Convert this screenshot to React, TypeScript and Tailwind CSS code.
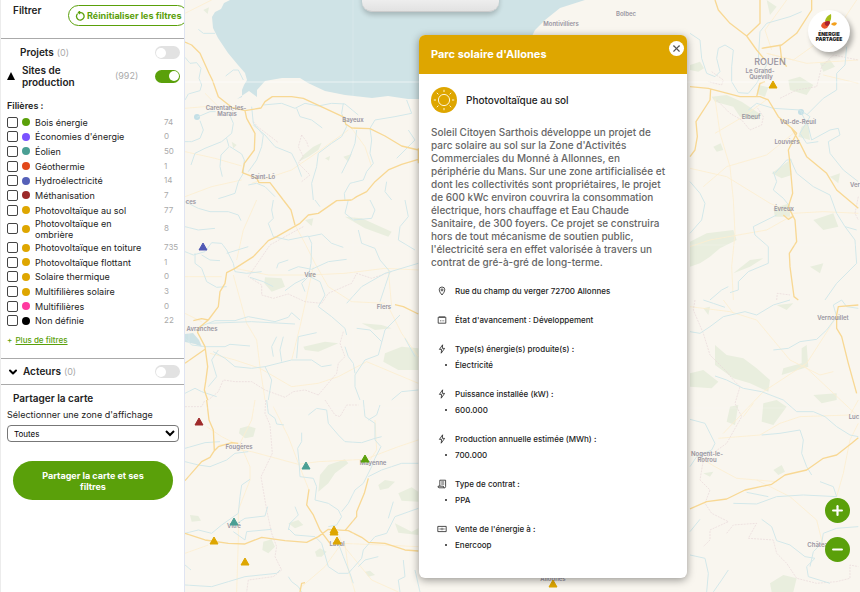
import React from "react";
import { ChevronDown, Minus, Plus, X } from "lucide-react";

const sectors = [
  { name: "Bois énergie", count: 74, dot: "bg-[#5aa00a]" },
  { name: "Économies d'énergie", count: 0, dot: "bg-[#7a52ff]" },
  { name: "Éolien", count: 50, dot: "bg-[#4a9f94]" },
  { name: "Géothermie", count: 1, dot: "bg-[#e2481a]" },
  { name: "Hydroélectricité", count: 14, dot: "bg-[#5560b8]" },
  { name: "Méthanisation", count: 7, dot: "bg-[#9b2929]" },
  { name: "Photovoltaïque au sol", count: 77, dot: "bg-[#dea600]" },
  { name: "Photovoltaïque en ombrière", count: 8, dot: "bg-[#dea600]" },
  { name: "Photovoltaïque en toiture", count: 735, dot: "bg-[#dea600]" },
  { name: "Photovoltaïque flottant", count: 1, dot: "bg-[#dea600]" },
  { name: "Solaire thermique", count: 0, dot: "bg-[#dea600]" },
  { name: "Multifilières solaire", count: 3, dot: "bg-[#dea600]" },
  { name: "Multifilières", count: 0, dot: "bg-[#ff3aa0]" },
  { name: "Non définie", count: 22, dot: "bg-black" },
];

// Outline icons, on a 10 unit grid
const icons = {
  pin: "M5 9Q2.2 5.8 2.2 3.8A2.8 2.8 0 0 1 7.8 3.8Q7.8 5.8 5 9ZM5 2.9A1 1 0 1 0 5 4.9A1 1 0 1 0 5 2.9",
  calendar: "M1.2 2.2H8.8V8.2H1.2ZM3 1V3M5 1V3M7 1V3M3 5.8H3.8M4.7 5.8H5.5M6.4 5.8H7.2",
  bolt: "M5.6 .8L2.4 5.4H4.6L4.2 9.2L7.6 4.4H5.4Z",
  contract: "M2.8 7V1.2H8.6V7.6Q8.6 8.8 7.4 8.8H2Q1 8.8 1 7.2H6.4Q6.4 8.8 7.4 8.8M4.2 3H7.2M4.2 5H7.2",
  banknote: "M.8 2.4H9.2V7.6H.8ZM5 3.8V6.2M3.8 4.4V5.6M6.2 4.4V5.6M2.2 4.6V5.4M7.8 4.6V5.4",
  reset: "M2.6 2.6A3.8 3.8 0 1 0 6.2 1.6M6.2 1.6H3.4M5 .2L3.4 1.6L5 3",
};

const details = [
  { icon: icons.pin, label: "Rue du champ du verger 72700 Allonnes" },
  { icon: icons.calendar, label: "État d'avancement : Développement" },
  { icon: icons.bolt, label: "Type(s) énergie(s) produite(s) :", value: "Électricité" },
  { icon: icons.bolt, label: "Puissance installée (kW) :", value: "600.000" },
  { icon: icons.bolt, label: "Production annuelle estimée (MWh) :", value: "700.000" },
  { icon: icons.contract, label: "Type de contrat :", value: "PPA" },
  { icon: icons.banknote, label: "Vente de l'énergie à :", value: "Enercoop" },
];

const towns = [
  { name: "Carentan-les-", x: 41, y: 110 },
  { name: "Marais", x: 42, y: 116 },
  { name: "Bayeux", x: 168, y: 122 },
  { name: "Saint-Lô", x: 78, y: 179 },
  { name: "ces", x: 6, y: 204 },
  { name: "Vire", x: 125, y: 277 },
  { name: "Flers", x: 199, y: 309 },
  { name: "Avranches", x: 17, y: 331 },
  { name: "Fougères", x: 54, y: 449 },
  { name: "Mayenne", x: 188, y: 465 },
  { name: "Vitré", x: 49, y: 528 },
  { name: "Laval", x: 152, y: 546 },
  { name: "Montivilliers", x: 376, y: 26 },
  { name: "Bolbec", x: 441, y: 16 },
  { name: "Le Grand-", x: 575, y: 73 },
  { name: "Quevilly", x: 576, y: 79 },
  { name: "Elbeuf", x: 566, y: 119 },
  { name: "Val-de-Reuil", x: 613, y: 124 },
  { name: "Louviers", x: 602, y: 144 },
  { name: "Évreux", x: 599, y: 211 },
  { name: "Ver", x: 670, y: 187 },
  { name: "Vernouillet", x: 648, y: 320 },
  { name: "Luc", x: 669, y: 419 },
  { name: "Nogent-le-", x: 522, y: 456 },
  { name: "Rotrou", x: 522, y: 462 },
  { name: "Châteaudun", x: 640, y: 547 },
  { name: "Allonnes", x: 368, y: 581 },
];

const markers = [
  { x: 18, y: 247, color: "#5058b4" },
  { x: 14, y: 422, color: "#9f2a2a" },
  { x: 121, y: 466, color: "#4a9f94" },
  { x: 180, y: 459, color: "#5aa00a" },
  { x: 49, y: 522, color: "#4a9f94" },
  { x: 29, y: 541, color: "#dea600" },
  { x: 60, y: 562, color: "#dea600" },
  { x: 149, y: 532, color: "#dea600" },
  { x: 149, y: 530, color: "#dea600" },
  { x: 152, y: 541, color: "#dea600" },
  { x: 588, y: 85, color: "#dea600" },
  { x: 368, y: 584, color: "#dea600" },
];

// Each map sheet is drawn at three units per map unit
const sheets = [
  {
    at: "translate(0 0) scale(0.3333)",
    woods: "M355 465L385 440L410 428L400 450L370 470L340 485ZM420 475L435 468L432 482ZM140 425L155 435L145 445ZM55 30L72 22L68 42ZM475 470L500 462L490 485Z",
    rivers:
      "M0 172L15 190L35 188L48 205L42 235L50 255L45 272L10 282L0 300M40 88L55 100L90 100M35 352L75 335L92 335M45 362L55 390L45 415L20 425L0 425M130 335L145 370L140 400L110 425L60 445L30 460L18 495M125 415L132 440L108 465L105 500L112 530M135 440L170 462L178 480L175 520L160 545L150 580L120 590L100 596M200 320L205 370L235 405L230 440L215 480L190 515M205 375L240 405L270 440L320 460L335 490L350 530M235 315L290 310L330 325L360 310L400 318L440 310L480 312L520 345M335 325L345 350L380 360L412 384M475 310L470 340L485 380L470 410L440 430L400 460L395 500L380 550L385 600M515 390L510 430L495 470L470 520M665 300L680 340L630 350L570 360L555 385L560 420L555 460L565 490L545 515L535 540L495 550L478 580L480 600M670 390L690 420L660 450L635 475M190 555L215 550L240 560L270 590M605 545L600 575L620 600M122 228L145 210L160 210L175 240",
    lanes: "M0 40L30 25L80 0M0 325L60 320L110 325M0 455L90 475L170 498M200 550L320 510L400 455L490 390M500 385L540 440L560 500M0 590L80 560L170 540M100 320L60 280",
    roads:
      "M0 126L20 135L45 160L72 220L82 240L100 290L140 322L180 332L228 324L240 305L262 290L320 290L355 295L420 325L478 352L482 372L500 384L555 386L600 408L650 438L700 450M180 332L185 355L210 400L208 450L178 490L172 518L215 535L222 548L255 548L295 600M700 478L650 493L610 510L570 545L545 575L515 590L500 600M700 445L700 490",
    borders: "M350 405L340 440L355 470L340 490L375 525L350 545M350 405L365 425L370 440M205 365L220 382L260 412L280 428",
  },
  {
    at: "translate(0 200) scale(0.3333)",
    woods: "M240 232L290 235L300 260L260 275L238 250ZM355 440L420 425L460 430L400 455L360 450ZM600 460L650 440L700 445V510L640 510L595 485ZM360 60L385 55L380 78ZM480 50L530 55L620 95L610 110L540 85ZM530 370L590 375L620 385L570 390Z",
    rivers:
      "M0 5L40 25L75 35L130 35L160 45L168 62M0 80L40 90L90 85M0 155L25 165L60 155L80 128L110 130L125 150L145 190L150 215L185 220L230 215M30 160L30 190L50 205L65 245L95 262L125 260M50 165L75 180L105 182M125 160L190 140M265 0L260 30L265 55L250 70L265 110L310 120L370 108L380 130L378 190L370 230L350 250L360 275M360 235L330 250L300 272M390 0L405 20M370 110L410 102L440 130L475 142M310 212L340 200L380 208L430 185L485 178M310 180L280 190L275 205M195 232L235 245L265 260M50 378L90 362L150 362L190 350L270 365L310 352L320 338L345 360M70 370L200 365L330 372M0 415L20 435L60 440L120 440L135 433L195 438M85 455L120 475L150 500L200 505L240 500L320 480L380 480L410 500L440 495M70 560L95 530L80 480L100 450M265 470L260 440L275 410M290 485L285 450L295 410M335 475L340 410L395 398M240 500L260 540L250 600M375 230L405 245L420 285L400 320L440 350L480 385L485 405M490 0L480 40L505 60L560 55L570 30L555 0M520 90L530 130L570 145L585 180L615 215L600 260L585 305M645 345L600 390L580 465L540 480L510 525L510 560L525 600M485 310L530 260L600 220L700 190M660 415L690 470M515 385L555 390L590 425M660 0L670 50L645 80L640 120L690 150M480 440L490 470L505 490L510 520M0 580L30 565L50 575L95 590M620 600L650 575L700 570",
    lanes: "M150 205L250 225L375 225L480 220L600 205L700 210M215 0L175 90L155 180M330 75L360 130L390 190L430 260L500 305L600 310M385 200L345 380L320 480M0 230L110 230M145 225L185 370L215 420L225 500L240 600M75 460L150 480L225 505L320 560L400 550L460 530L545 485L700 550M0 340L50 365M610 320L650 400L700 470M610 210L620 320",
    roads:
      "M500 0L455 2L400 40L370 45L345 70L275 110L250 122L205 170L150 205L125 218L120 250L105 275L100 320L70 360L40 385L38 398L60 440L68 500L62 545L58 570L68 600M295 0L318 30L330 75M25 362L50 356L70 360M0 490L60 448M630 314L655 320L700 342",
    borders: "M355 80L300 110L255 135L190 230L230 255L230 285L265 295L310 282L360 305L410 310L430 280L500 250L515 220L560 235L620 215M475 395L465 430L480 470L460 490L455 520L400 585M400 585L360 570L325 575L300 592L240 570L200 545L150 545L115 540L100 575L70 600",
  },
  {
    at: "translate(0 400) scale(0.3333)",
    woods: "M165 85L190 78L212 85L205 110L180 115L162 100ZM405 225L430 195L480 178L490 190L450 220L430 250L400 275ZM235 425L260 418L270 440L250 460L232 450ZM15 345L40 348L48 362L20 365ZM640 280L680 262L700 275V305L650 302ZM580 255L600 240L630 245L610 265L585 270ZM630 370L680 395L700 385V405L640 398ZM390 455L405 445L425 455L410 470L395 470ZM310 370L340 360L355 375L330 385ZM540 515L555 512L570 525L550 530Z",
    rivers:
      "M0 145L60 128L105 125M0 185L40 195L75 200L125 180L150 160L190 155M245 0L250 40L270 55L275 72L297 75M350 98L350 125L338 145L342 185L345 230L385 235L395 260L390 300L430 310L460 330L470 350L455 375L430 380M370 45L395 25L425 30L430 70L460 105L480 125L530 128L570 115L590 110M535 0L540 50L570 70L570 120L588 140L570 175L560 200L535 250L510 270L490 310L470 335M550 230L590 210L620 200L650 190L700 190M585 15L575 45L550 60M0 400L40 390L80 400L110 375L160 340L165 290L170 255L195 238M140 380L180 355L240 348L248 320M145 395L180 420L185 395L260 388M310 385L330 405L390 410L410 430L430 500L460 520L490 520L530 475L535 450L570 410L605 400L630 350L700 325M610 355L625 305M0 555L80 560L130 545L180 530L275 520L285 510M310 530L320 545L340 560L350 576M330 320L340 345L315 370L310 390M460 430L475 470L495 520L505 550M655 480L660 530L640 540L645 576M0 495L18 510M520 500L540 480L580 470M690 510L705 576",
    lanes: "M65 80L110 110L150 130L100 135M210 0L200 60L165 130L195 200L195 240L160 330L160 420L155 576M165 150L200 155L340 193L400 185L540 178L640 140L700 120M265 20L310 110L340 190L372 270M460 400L470 430L420 500L350 560M470 430L590 435L700 440M480 430L490 510L510 576M70 435L0 460M470 430L560 540L640 576M570 60L575 150L555 180",
    roads:
      "M65 0L72 60L85 90L88 152L75 172L50 185L0 242M88 152L100 140L140 128L160 130M0 400L60 420L130 430L180 432L230 412L300 422L365 427L400 410L430 388L490 392L530 412L550 427L600 430L660 450L700 453M372 268L365 315L385 345L405 390L435 430M550 235L538 280L515 335L515 350L480 392M345 576L350 550L360 548",
    borders: "M242 0L240 40L255 75L262 160L228 230L245 330L260 400L275 440L270 470L290 510L265 530L190 540L185 576M420 0L450 45L465 50L485 15L520 15M0 20L50 20L60 0",
  },
  {
    at: "translate(505 0) scale(0.3333)",
    woods: "M0 195L30 185L42 205L25 215L0 210ZM65 290L110 285L155 305L215 345L195 360L150 350L130 320L75 305ZM205 255L235 262L225 290L200 282ZM295 240L330 230L370 255L350 285L300 270ZM390 190L420 180L435 200L400 215ZM0 725L50 700L130 690L140 720L90 745L60 770L30 790L0 800ZM70 440L92 430L100 450L80 455ZM335 380L355 370L360 420L325 410ZM245 520L300 480L305 525L275 535ZM250 625L300 610L300 650L255 650ZM370 660L430 640L445 680L400 690ZM130 820L180 780L220 775L180 800ZM230 0L260 20L240 45ZM420 530L450 520L445 550ZM360 800L400 790L390 820Z",
    rivers:
      "M0 100L30 120L35 175L50 220L75 230L90 215L80 175L85 145L105 135L130 150L125 200L125 245L145 278L175 280L200 250L235 185M175 330L200 310L250 325L330 330L355 380L365 420L420 390L445 385L450 405L415 425L420 460L460 510L505 545M205 180L210 95L230 70L300 50L335 35M350 345L400 295L440 270L440 220L465 195L470 140M300 475L320 520L370 560L420 585L440 640L465 680L500 690M250 515L260 545L250 570L280 595L300 620M255 520L290 480L305 480M0 545L30 580L45 610L35 660L0 700M260 645L190 680L195 705L235 740L235 790L175 815L145 845L145 870L120 878M115 860L95 870L60 900M465 680L495 720L500 790L440 850L405 900M330 330L360 350L330 400L350 430L385 425",
    lanes: "M290 0L225 90L245 150M75 295L90 400L120 500L130 600L135 700L125 800L130 900M0 505L110 530L240 610L310 640L400 635L505 640M310 400L230 465L110 500L40 560M310 645L230 690L60 720L0 740M500 0L460 60L380 130L310 180L230 160L350 190L505 180M235 295L160 350L75 400M400 225L505 250",
    roads:
      "M75 0L85 30L120 70L170 108L200 150L225 180M210 0L210 70L170 108M365 0L365 30L320 100L275 135L215 145M270 135L275 180L290 200M0 260L55 265L150 290L210 290L235 300L265 350L305 385L325 420L350 470L410 520L440 570L505 625M62 268L60 300L18 365L22 410L15 450L0 470M305 385L320 400L295 450L300 490L308 580L295 620L315 660L320 725L298 760L300 800L312 890L325 900M200 290L210 250L225 245M280 645L295 658L308 650",
    borders: "M65 215L100 240L95 255L55 245M80 300L120 340L155 360L180 390L215 375L220 350L200 320M270 295L320 270L380 260L395 200L430 165L505 180M505 590L495 640L505 660M260 900L262 880L300 885",
  },
  {
    at: "translate(505 300) scale(0.3333)",
    woods: "M75 135L110 165L160 175L200 205L240 240L235 275L180 250L130 235L75 195ZM220 310L260 300L290 320L250 375L215 365ZM0 220L40 210L85 245L65 265L0 260ZM335 145L350 135L355 200L275 225L280 205L335 190ZM370 285L440 280L440 300L395 310ZM240 850L280 825L320 835L310 876L245 876ZM250 510L275 495L285 515L265 525ZM120 320L145 315L135 375L110 365ZM40 25L60 20L55 45ZM260 15L310 10L290 30ZM40 520L70 515L60 530Z",
    rivers:
      "M0 95L30 100L60 80L100 50L165 35L200 45L250 15L300 0M40 0L70 10L105 22M75 228L110 240L160 265L215 275L280 300L320 335L370 335L405 350L440 380L480 405L505 410M250 150L295 145L330 125L380 118L410 90L440 50L430 15L455 0M215 405L270 400L330 390L340 420L335 460L350 500L365 525M0 358L45 370L60 400L75 430L65 450M65 450L20 470L0 500M130 610L200 612L260 590L340 585L440 590M170 577L235 590M390 545L430 560L440 590M215 658L245 680L260 722L300 735L345 770L375 775L350 800L355 830L420 850M400 700L440 685L505 680M400 700L395 730L370 755L360 800M0 765L45 775L55 820L50 876M115 810L95 840L70 876M0 695L30 658M455 0L470 20L505 25",
    lanes: "M0 20L120 35L200 60L300 180L390 225L430 215M440 50L350 190L220 275L100 400M85 415L210 405L270 370L330 350L480 345L505 300M0 455L75 500L140 535L260 545M340 195L505 350M190 310L160 350M505 370L480 420L460 520L440 590M300 590L380 660L400 740M100 0L130 40M200 540L300 590",
    roads:
      "M0 627L50 605L110 597L165 570L245 553L285 525L350 510L400 475L440 465L485 430L505 413M505 15L445 20L440 45L440 85L455 110L475 190L500 280",
    borders: "M15 0L10 30L40 100L60 165L110 215L130 240L150 260L135 310L155 350L110 430L40 480L30 540L60 570L45 610L65 640L115 665L60 690L60 720L40 740M110 700L130 675L200 670L175 715L250 720L260 760L290 790L320 835L380 850L440 845L480 835L480 795L505 800",
  },
];

const Map = () => (
  <svg
    viewBox="0 0 675 592"
    preserveAspectRatio="xMidYMid slice"
    className="absolute inset-0 h-full w-full bg-[#f9f6ef]"
    role="img"
    aria-label="Carte des projets"
  >
    <path
      fill="#cfe3e6"
      d="M45 0L39 3L36 9L30 12L27 17L28 28L33 38L43 53L53 65L60 73L62 80L59 85L57 90L57 97L52 99L64 91L72 97L72 90L80 81L97 78L115 78L123 83L140 91L160 95L187 98L203 96L223 99L270 99L330 60L345 40L350 30L360 20L375 8L400 0ZM0 334L8 333L14 340L17 347L10 344L0 342Z"
    />
    <circle cx="12" cy="117" r="3" fill="#c3dfe6" />
    <circle cx="616" cy="112" r="3" fill="#c3dfe6" />
    {sheets.map((sheet) => (
      <g key={sheet.at} transform={sheet.at} fill="none" strokeLinejoin="round">
        <path d={sheet.woods} fill="#e9eede" />
        <path d={sheet.lanes} stroke="#fdeed0" strokeWidth="2.5" />
        <path d={sheet.borders} stroke="#e8d8da" strokeWidth="2" strokeDasharray="6 3" />
        <path d={sheet.rivers} stroke="#d3e8ea" strokeWidth="3" />
        <path d={sheet.roads} stroke="#f8d894" strokeWidth="4" />
      </g>
    ))}
    <g stroke="#fff">
      <path d="M0 82H675" strokeOpacity="0.6" />
      <path d="M0 245H675M0 408H675M4 0V592M168 0V592" strokeOpacity="0.2" />
    </g>
    <g
      fontFamily="Inter, sans-serif"
      fontSize="6"
      fontWeight="600"
      fill="#98949f"
      textAnchor="middle"
    >
      {towns.map((town) => (
        <text key={town.name} x={town.x} y={town.y}>
          {town.name}
        </text>
      ))}
      <text x="585" y="65" fontSize="9" fontWeight="500">
        ROUEN
      </text>
    </g>
    {markers.map((m) => (
      <path
        key={`${m.x}-${m.y}`}
        d={`M${m.x} ${m.y - 4}L${m.x + 4} ${m.y + 3}H${m.x - 4}Z`}
        fill={m.color}
        stroke={m.color}
      />
    ))}
  </svg>
);

const Icon = ({ d, bold = false }: { d: string; bold?: boolean }) => (
  <svg
    viewBox="0 0 10 10"
    className="size-[10px] shrink-0"
    fill="none"
    stroke="currentColor"
    strokeWidth={bold ? 1.3 : 0.8}
    strokeLinejoin="round"
  >
    <path d={d} />
  </svg>
);

const Toggle = ({ label, on = false }: { label: string; on?: boolean }) => (
  <input
    type="checkbox"
    role="switch"
    aria-label={label}
    defaultChecked={on}
    className="flex h-[13px] w-[25px] shrink-0 appearance-none items-center rounded-full bg-[#e2e2e2] px-px before:block before:size-[10px] before:rounded-full before:bg-white before:content-[''] checked:justify-end checked:bg-[#5aa00a]"
  />
);

const SunIcon = () => (
  <svg viewBox="0 0 26 26" className="size-[26px]" fill="none">
    <circle cx="13" cy="13" r="13" fill="#dea600" />
    <g stroke="#fff5d6">
      <circle cx="13" cy="13" r="5.6" />
      <path d="M13 2.8V5M13 21v2.2M2.8 13H5M21 13h2.2M5.8 5.8l1.6 1.6M18.6 18.6l1.6 1.6M20.2 5.8l-1.6 1.6M7.4 18.6l-1.6 1.6" />
    </g>
  </svg>
);

const Logo = () => (
  <div className="flex size-[42px] flex-col items-center rounded-full bg-white pt-1 text-center text-[5px] leading-[5px] font-black text-[#222] shadow-[3px_4px_5px_rgba(0,0,0,0.3)]">
    <svg viewBox="0 0 20 16" className="mb-[2px] h-4 w-5">
      <path d="M6 7Q7 2 12 0Q13 5 10 9Z" fill="#a5bd19" />
      <path d="M2 12Q3 7 10 7Q12 9 8 14Q4 16 2 12Z" fill="#e8552b" />
      <path d="M6 8Q10 6 11 8Q11 11 8 12Q5 11 6 8Z" fill="#a9212e" />
      <path d="M12 10Q15 7 18 9Q17 13 13 11Z" fill="#f3a01c" />
    </svg>
    <span>ÉNERGIE</span>
    <span>PARTAGÉE</span>
  </div>
);

const Sidebar = () => (
  <aside className="w-[185px] shrink-0 overflow-hidden border-x border-l-[#ececec] border-r-[#dfe4f2] bg-white text-[#222]">
    <div className="flex h-[38px] items-start justify-between pt-[5px] pl-3">
      <h2 className="text-[10px] leading-[11px] font-semibold">Filtrer</h2>
      <button className="-mr-1 flex h-[21px] w-[120px] shrink-0 items-center gap-[2px] rounded-full border border-[#5aa00a] pl-[6px] text-[9px] font-bold whitespace-nowrap text-[#5aa00a]">
        <Icon d={icons.reset} bold />
        Réinitialiser les filtres
      </button>
    </div>

    <section className="border-t border-[#aaa] pt-[7px] pr-1 pb-3 pl-[6px]">
      <div className="flex h-[13px] items-center pl-[13px] text-[10px]">
        <h3 className="font-semibold">Projets</h3>
        <span className="ml-[3px] grow text-[9px] text-[#aaa]">(0)</span>
        <Toggle label="Projets" />
      </div>
      <div className="mt-[5px] flex items-center gap-[7px] text-[10px]">
        <svg viewBox="0 0 8 8" className="size-2">
          <path d="M4 0L8 8H0Z" />
        </svg>
        <h3 className="w-[86px] leading-3 font-semibold">
          Sites de production
        </h3>
        <span className="grow text-[9px] text-[#aaa]">(992)</span>
        <Toggle label="Sites de production" on />
      </div>

      <h4 className="mt-3 text-[9px] leading-[12px] font-semibold">Filières :</h4>
      <ul className="mt-[3px] flex h-[213px] flex-col justify-between text-[9px]">
        {sectors.map((sector) => (
          <li key={sector.name}>
            <label className="flex min-h-[14px] items-center leading-[11px]">
              <input
                type="checkbox"
                className="size-[11px] shrink-0 appearance-none rounded-[2px] border border-[#444] bg-white"
              />
              <span className={`mx-1 size-2 shrink-0 rounded-full ${sector.dot}`} />
              <span className="w-[130px] shrink-0 pl-px">
                <span className="block w-[115px]">{sector.name}</span>
              </span>
              <span className="text-[8px] text-[#aaa]">{sector.count}</span>
            </label>
          </li>
        ))}
      </ul>
      <p className="mt-[6px] text-[8px] leading-[12px] font-medium text-[#5aa00a]">
        + <a href="#filtres" className="ml-px underline">Plus de filtres</a>
      </p>
    </section>

    <section className="flex h-[27px] items-center border-y border-[#aaa] pr-1 pl-[6px]">
      <ChevronDown size={12} strokeWidth={4} className="text-black" />
      <h3 className="ml-1 text-[10px] font-semibold">Acteurs</h3>
      <span className="ml-[3px] grow text-[9px] text-[#aaa]">(0)</span>
      <Toggle label="Acteurs" />
    </section>

    <section className="pt-[7px] pr-[5px] pl-[6px]">
      <h3 className="pl-[6px] text-[10px] leading-3 font-semibold">Partager la carte</h3>
      <label htmlFor="zone" className="mt-[5px] block text-[9px] leading-3">
        Sélectionner une zone d'affichage
      </label>
      <select
        id="zone"
        className="mt-1 block h-[17px] w-full rounded-[4px] border border-[#777] bg-white pl-[2px] text-[8px] text-black"
      >
        <option>Toutes</option>
      </select>
      <button className="mt-[19px] ml-[6px] h-[39px] w-[160px] rounded-full bg-[#5aa00a] px-6 text-[9px] leading-[11px] font-bold text-white">
        Partager la carte et ses filtres
      </button>
    </section>
  </aside>
);

const SitePopup = () => (
  <article className="absolute top-[35px] left-[234px] w-[268px] overflow-hidden rounded-[6px] bg-white text-[#222] shadow-[0_2px_8px_rgba(0,0,0,0.4)]">
    <header className="flex h-[39px] items-center justify-between bg-[#dea600] pr-[3px] pl-3">
      <h2 className="text-[11px] font-bold text-white">Parc solaire d'Allones</h2>
      <button
        aria-label="Fermer"
        className="mb-3 flex size-[15px] items-center justify-center rounded-full bg-white text-[#555]"
      >
        <X size={11} strokeWidth={2.5} />
      </button>
    </header>
    <div className="px-3 pt-[13px] pb-[25px]">
      <div className="flex items-center gap-[9px]">
        <SunIcon />
        <h3 className="text-[10px] font-medium">Photovoltaïque au sol</h3>
      </div>
      <p className="mt-[13px] mr-1 text-[10px] leading-[13px] font-medium text-[#666]">
        Soleil Citoyen Sarthois développe un projet de parc solaire au sol sur
        la Zone d'Activités Commerciales du Monné à Allonnes, en périphérie du
        Mans. Sur une zone artificialisée et dont les collectivités sont
        propriétaires, le projet de 600 kWc environ couvrira la consommation
        électrique, hors chauffage et Eau Chaude Sanitaire, de 300 foyers. Ce
        projet se construira hors de tout mécanisme de soutien public,
        l'électricité sera en effet valorisée à travers un contrat de
        gré-à-gré de long-terme.
      </p>
      <ul className="mt-[14px] flex flex-col gap-[13px] pl-[6px] text-[8px] leading-4 font-medium">
        {details.map((item) => (
          <li key={item.label}>
            <div className="flex items-center gap-2">
              <Icon d={item.icon} />
              {item.label}
            </div>
            {item.value && (
              <div className="flex items-center gap-2 pl-2">
                <span className="size-[2px] rounded-full bg-[#222]" />
                {item.value}
              </div>
            )}
          </li>
        ))}
      </ul>
    </div>
  </article>
);

const App = () => {
  return (
    <div className="flex min-h-screen overflow-hidden font-['Inter',sans-serif]">
      <Sidebar />
      <main className="relative grow overflow-hidden">
        <Map />

        {/* Search bar */}
        <div className="absolute -top-4 left-[177px] h-7 w-[137px] rounded-[10px] border-b border-[#ccc] bg-linear-to-b from-white to-[#e2e2e2] shadow-[0_3px_5px_rgba(0,0,0,0.2)]" />

        <SitePopup />

        <div className="absolute top-[10px] right-[10px]">
          <Logo />
        </div>

        {/* Zoom buttons */}
        <div className="absolute right-[10px] bottom-[30px] flex flex-col gap-[14px]">
          <button
            aria-label="Zoomer"
            className="flex size-[25px] items-center justify-center rounded-full bg-[#5aa00a] text-white"
          >
            <Plus size={15} strokeWidth={3.5} />
          </button>
          <button
            aria-label="Dézoomer"
            className="flex size-[25px] items-center justify-center rounded-full bg-[#5aa00a] text-white"
          >
            <Minus size={15} strokeWidth={3.5} />
          </button>
        </div>
      </main>
    </div>
  );
};

export default App;
